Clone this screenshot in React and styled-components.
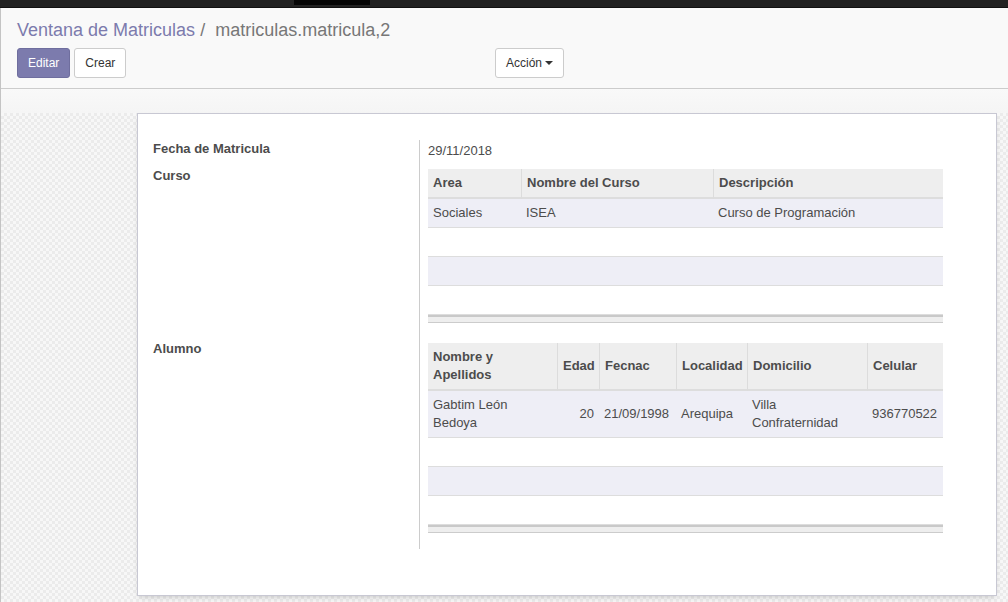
import React from "react";
import styled, { createGlobalStyle } from "styled-components";

const Global = createGlobalStyle`
  html, body {
    margin: 0;
    padding: 0;
    background: #f9f9f9;
  }
  body {
    font-family: "Liberation Sans", Arial, sans-serif;
    font-size: 13px;
    color: #4c4c4c;
  }
`;

const Page = styled.div`
  width: 1008px;
  height: 602px;
  display: flex;
  flex-direction: column;
  overflow: hidden;
`;

const TopBar = styled.div`
  height: 7px;
  flex: none;
  background: #222222;
  border-bottom: 1px solid #111;
  display: flex;
`;

const TopTab = styled.div`
  margin-left: 294px;
  width: 76px;
  height: 5px;
  background: #050505;
`;

const Main = styled.div`
  flex: 1;
  display: flex;
  flex-direction: column;
  border-left: 1px solid #c4c4c4;
  min-height: 0;
`;

const ControlPanel = styled.div`
  flex: none;
  background: #f9f9f9;
  border-bottom: 1px solid #cccccc;
  padding: 9px 16px 10px 16px;
`;

const Breadcrumb = styled.div`
  display: flex;
  align-items: center;
  height: 26px;
  margin-bottom: 5px;
  font-size: 18px;
  line-height: 26px;
`;

const Crumb = styled.span`
  color: ${(p) => (p.$active ? "#777777" : "#7c7bad")};
`;

const Slash = styled.span`
  color: #777777;
  padding: 0 5px;
  white-space: pre;
`;

const ButtonRow = styled.div`
  display: grid;
  grid-template-columns: 478px 1fr;
`;

const ButtonGroup = styled.div`
  display: flex;
  gap: 4px;
`;

const Button = styled.button`
  font-family: "Liberation Sans", Arial, sans-serif;
  font-size: 12px;
  line-height: 18px;
  height: 30px;
  padding: 5px 10px;
  border-radius: 3px;
  border: 1px solid ${(p) => (p.$primary ? "#6f6e9e" : "#cccccc")};
  background: ${(p) => (p.$primary ? "#7c7bad" : "#ffffff")};
  color: ${(p) => (p.$primary ? "#ffffff" : "#333333")};
  display: inline-flex;
  align-items: center;
  cursor: pointer;
`;

const Caret = styled.span`
  display: inline-block;
  margin-left: 3px;
  border-top: 4px solid #333;
  border-left: 4px solid transparent;
  border-right: 4px solid transparent;
`;

const SheetBg = styled.div`
  flex: 1;
  display: flex;
  flex-direction: column;
  min-height: 0;
`;

const TopStrip = styled.div`
  height: 24px;
  flex: none;
  background: linear-gradient(#f9f9f9, #f5f5f5);
`;

const Pattern = styled.div`
  flex: 1;
  padding: 0 11px 0 136px;
  background-color: #f7f7f7;
  background-image: conic-gradient(
    #ebebeb 25%,
    transparent 0 50%,
    #ebebeb 0 75%,
    transparent 0
  );
  background-size: 6px 6px;
`;

const Sheet = styled.div`
  background: #ffffff;
  border: 1px solid #c8c8d3;
  box-shadow: 0 3px 6px -2px rgba(0, 0, 0, 0.18);
  padding: 26px 52px 46px 15px;
`;

const Group = styled.div`
  display: grid;
  grid-template-columns: 266px 1fr;
`;

const Label = styled.div`
  font-weight: bold;
  line-height: 18px;
  margin-top: ${(p) => p.$shift ?? -2}px;
`;

const Value = styled.div`
  border-left: 1px solid #cccccc;
  padding: ${(p) => p.$pad || "0"};
  padding-left: 8px;
  line-height: 18px;
`;

const Table = styled.table`
  width: 515px;
  table-layout: fixed;
  border-collapse: separate;
  border-spacing: 0;
  font-size: 13px;
  color: #4c4c4c;
`;

const Th = styled.th`
  background: #eeeeee;
  font-weight: bold;
  text-align: left;
  vertical-align: middle;
  padding: 5px;
  line-height: 18px;
  border-bottom: 2px solid #dddddd;
  border-left: ${(p) => (p.$first ? "none" : "1px solid #dcdcdc")};
`;

const Tr = styled.tr`
  background: ${(p) => (p.$odd ? "#eeeef6" : "#ffffff")};
`;

const Td = styled.td`
  padding: 5px;
  line-height: 18px;
  height: 18px;
  vertical-align: middle;
  border-bottom: 1px solid #dddddd;
  text-align: ${(p) => (p.$num ? "right" : "left")};
`;

const FootCell = styled.td`
  height: 5px;
  padding: 0;
  background: #eeeeee;
  border-top: 2px solid #c9c9c9;
  border-bottom: 1px solid #cccccc;
`;

const ListTable = ({ cols, head, rows }) => {
  const empties = [0, 1, 2];
  return (
    <Table>
      <colgroup>
        {cols.map((w, i) => (
          <col key={i} style={{ width: w }} />
        ))}
      </colgroup>
      <thead>
        <tr>
          {head.map((h, i) => (
            <Th key={i} $first={i === 0}>
              {h}
            </Th>
          ))}
        </tr>
      </thead>
      <tbody>
        {rows.map((r, ri) => (
          <Tr key={ri} $odd>
            {r.map((c, ci) => (
              <Td key={ci} $num={typeof c === "number"}>
                {c}
              </Td>
            ))}
          </Tr>
        ))}
        {empties.map((e) => (
          <Tr key={"e" + e} $odd={e === 1}>
            <Td colSpan={cols.length}></Td>
          </Tr>
        ))}
      </tbody>
      <tfoot>
        <tr>
          <FootCell colSpan={cols.length}></FootCell>
        </tr>
      </tfoot>
    </Table>
  );
};

const App = () => {
  return (
    <Page>
      <Global />
      <TopBar>
        <TopTab />
      </TopBar>
      <Main>
        <ControlPanel>
          <Breadcrumb>
            <Crumb>Ventana de Matriculas</Crumb>
            <Slash>/ </Slash>
            <Crumb $active>matriculas.matricula,2</Crumb>
          </Breadcrumb>
          <ButtonRow>
            <ButtonGroup>
              <Button $primary>Editar</Button>
              <Button>Crear</Button>
            </ButtonGroup>
            <ButtonGroup>
              <Button>
                Acción
                <Caret />
              </Button>
            </ButtonGroup>
          </ButtonRow>
        </ControlPanel>

        <SheetBg>
          <TopStrip />
          <Pattern>
            <Sheet>
              <Group>
                <Label $shift={0}>Fecha de Matricula</Label>
                <Value $pad="2px 0 9px 0">29/11/2018</Value>

                <Label $shift={-2}>Curso</Label>
                <Value $pad="0 0 20px 0">
                  <ListTable
                    cols={[93, 192, 230]}
                    head={["Area", "Nombre del Curso", "Descripción"]}
                    rows={[["Sociales", "ISEA", "Curso de Programación"]]}
                  />
                </Value>

                <Label $shift={-3}>Alumno</Label>
                <Value $pad="0 0 16px 0">
                  <ListTable
                    cols={[129, 42, 77, 71, 120, 76]}
                    head={[
                      "Nombre y Apellidos",
                      "Edad",
                      "Fecnac",
                      "Localidad",
                      "Domicilio",
                      "Celular",
                    ]}
                    rows={[
                      [
                        "Gabtim León Bedoya",
                        20,
                        "21/09/1998",
                        "Arequipa",
                        "Villa Confraternidad",
                        "936770522",
                      ],
                    ]}
                  />
                </Value>
              </Group>
            </Sheet>
          </Pattern>
        </SheetBg>
      </Main>
    </Page>
  );
};

export default App;
